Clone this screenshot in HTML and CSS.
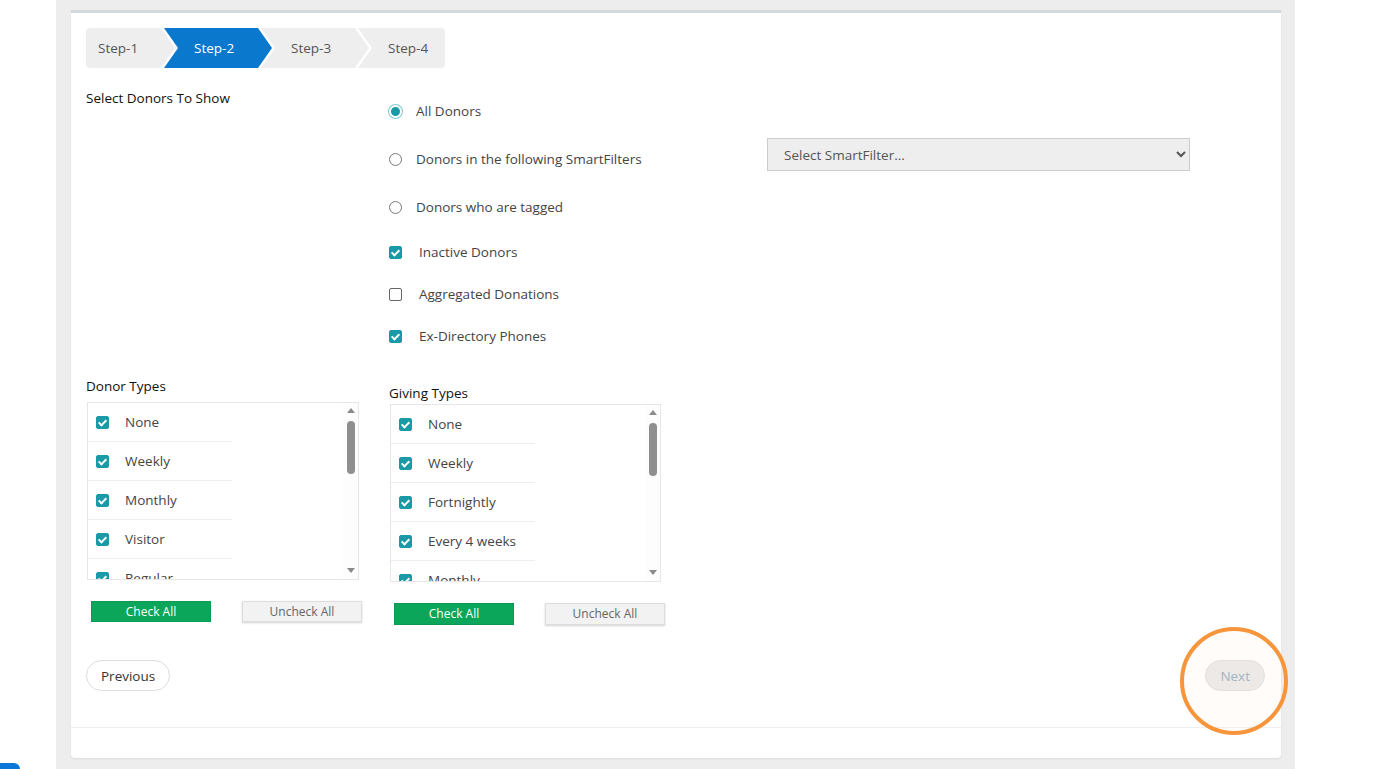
FILE: index.html
```html
<!DOCTYPE html>
<html>
<head>
  <title>Donor Report - Step 2</title>
  <link rel="stylesheet" href="styles.css">
</head>
<body>
  <div class="panel">
    <div class="card">
      <div class="card-body">
        <div class="steps">
          <div class="step step-first">Step-1</div>
          <div class="step active">Step-2</div>
          <div class="step">Step-3</div>
          <div class="step step-last">Step-4</div>
        </div>

        <div class="filters">
          <div class="section-label top-label">Select Donors To Show</div>
          <div class="options">
            <div class="opt radio-row"><span class="radio on"></span>All Donors</div>
            <div class="opt radio-row"><span class="radio"></span>Donors in the following SmartFilters</div>
            <div class="opt radio-row"><span class="radio"></span>Donors who are tagged</div>
            <div class="opt check-row"><span class="cb on"></span>Inactive Donors</div>
            <div class="opt check-row"><span class="cb"></span>Aggregated Donations</div>
            <div class="opt check-row"><span class="cb on"></span>Ex-Directory Phones</div>
          </div>
          <div class="smart">
            <select class="smart-select">
              <option>Select SmartFilter...</option>
            </select>
          </div>
        </div>

        <div class="types">
          <div class="type-col donor-col">
            <div class="section-label">Donor Types</div>
            <div class="listbox">
              <ul class="items">
                <li><span class="cb on"></span>None</li>
                <li><span class="cb on"></span>Weekly</li>
                <li><span class="cb on"></span>Monthly</li>
                <li><span class="cb on"></span>Visitor</li>
                <li><span class="cb on"></span>Regular</li>
              </ul>
              <div class="sbar"><span class="arr up"></span><span class="thumb"></span><span class="arr down"></span></div>
            </div>
            <div class="btns">
              <button class="btn-check">Check All</button>
              <button class="btn-uncheck">Uncheck All</button>
            </div>
          </div>

          <div class="type-col giving-col">
            <div class="section-label">Giving Types</div>
            <div class="listbox">
              <ul class="items">
                <li><span class="cb on"></span>None</li>
                <li><span class="cb on"></span>Weekly</li>
                <li><span class="cb on"></span>Fortnightly</li>
                <li><span class="cb on"></span>Every 4 weeks</li>
                <li><span class="cb on"></span>Monthly</li>
              </ul>
              <div class="sbar"><span class="arr up"></span><span class="thumb"></span><span class="arr down"></span></div>
            </div>
            <div class="btns">
              <button class="btn-check">Check All</button>
              <button class="btn-uncheck">Uncheck All</button>
            </div>
          </div>
        </div>

        <div class="nav">
          <button class="pill">Previous</button>
          <div class="next-wrap">
            <button class="pill next" disabled>Next</button>
            <span class="ring"></span>
          </div>
        </div>
      </div>
      <div class="card-footer"></div>
    </div>
  </div>
  <div class="chat-tab"></div>
</body>
</html>
```

FILE: styles.css
```css
body {
  margin: 0;
  background: #fff;
  font-family: "Open Sans", "Liberation Sans", sans-serif;
  font-size: 13.5px;
  color: #333;
}

.panel {
  margin-left: 56px;
  width: 1239px;
  height: 769px;
  padding-top: 10px;
  box-sizing: border-box;
  background: #eeedee;
  overflow: hidden;
}

.card {
  margin-left: 15px;
  width: 1210px;
  background: #fff;
  border-top: 3px solid #d4d8dc;
  border-radius: 0 0 4px 4px;
  box-shadow: 0 1px 2px rgba(0,0,0,0.08);
}

.card-body {
  padding: 15px 16px 36px 15px;
}

.card-footer {
  border-top: 1px solid #eeeeee;
  height: 30px;
}

/* steps */
.steps {
  display: flex;
  height: 40px;
}

.step {
  height: 40px;
  line-height: 40px;
  width: 108px;
  padding-left: 30px;
  box-sizing: border-box;
  background: #eeeeee;
  color: #555;
  margin-left: -11px;
  clip-path: polygon(0 0, calc(100% - 14px) 0, 100% 50%, calc(100% - 14px) 100%, 0 100%, 14px 50%);
}

.step-first {
  margin-left: 0;
  width: 89px;
  padding-left: 12px;
  border-radius: 4px 0 0 4px;
  clip-path: polygon(0 0, calc(100% - 14px) 0, 100% 50%, calc(100% - 14px) 100%, 0 100%);
}

.step-last {
  width: 87px;
  border-radius: 0 4px 4px 0;
  clip-path: polygon(0 0, 100% 0, 100% 100%, 0 100%, 14px 50%);
}

.step.active {
  background: #0a78cc;
  color: #fff;
}

/* top filters */
.filters {
  display: grid;
  grid-template-columns: 303px 378px 423px;
  margin-top: 19px;
}

.section-label {
  color: #111;
  line-height: 20px;
}

.top-label {
  padding-top: 1px;
}

.opt {
  display: flex;
  align-items: center;
  color: #444;
}

.radio-row {
  height: 48px;
}

.check-row {
  height: 42px;
}

.radio {
  width: 11px;
  height: 11px;
  border: 1px solid #777;
  border-radius: 50%;
  margin-right: 14px;
  flex-shrink: 0;
}

.radio.on {
  width: 9px;
  height: 9px;
  background: #1a9aa6;
  border: 2px solid #fff;
  box-shadow: 0 0 0 1px #7ccbd3;
}

.cb {
  position: relative;
  width: 11px;
  height: 11px;
  border: 1px solid #666;
  border-radius: 2px;
  background: #fff;
  margin-right: 17px;
  flex-shrink: 0;
}

.cb.on {
  background: #1a9aa6;
  border-color: #1a9aa6;
}

.cb.on::after {
  content: "";
  position: absolute;
  left: 3px;
  top: 1px;
  width: 3px;
  height: 6px;
  border: solid #fff;
  border-width: 0 2px 2px 0;
  transform: rotate(45deg);
}

.smart-select {
  margin-top: 51px;
  width: 423px;
  height: 33px;
  background: #eeeeee;
  border: 1px solid #cccccc;
  border-radius: 0;
  padding: 0 12px;
  font-family: inherit;
  font-size: 13.5px;
  color: #555;
}

/* donor / giving types */
.types {
  display: flex;
  margin-top: 19px;
}

.type-col {
  display: flex;
  flex-direction: column;
}

.donor-col {
  width: 303px;
}

.giving-col .section-label {
  padding-top: 7px;
}

.listbox {
  display: flex;
  border: 1px solid #e6e6e6;
  overflow: hidden;
}

.donor-col .listbox {
  margin: 6px 0 0 1px;
  width: 270px;
  height: 176px;
}

.giving-col .listbox {
  margin: 1px 0 0 1px;
  width: 269px;
  height: 176px;
}

.items {
  list-style: none;
  margin: 0;
  padding: 0;
  width: 144px;
  flex-shrink: 0;
}

.items li {
  display: flex;
  align-items: center;
  height: 38px;
  border-bottom: 1px solid #eeeeee;
  padding-left: 8px;
  color: #444;
}

.items .cb {
  margin-right: 16px;
}

.sbar {
  margin-left: auto;
  width: 15px;
  display: flex;
  flex-direction: column;
  align-items: center;
  padding: 5px 0 6px;
  box-sizing: border-box;
  background: #fdfdfd;
}

.arr {
  width: 0;
  height: 0;
  border-left: 4px solid transparent;
  border-right: 4px solid transparent;
}

.arr.up {
  border-bottom: 5px solid #8a8a8a;
}

.arr.down {
  margin-top: auto;
  border-top: 5px solid #8a8a8a;
}

.thumb {
  margin-top: 8px;
  width: 8px;
  height: 53px;
  border-radius: 4px;
  background: #8f8f8f;
}

.btns {
  display: flex;
  margin-top: 21px;
  padding-left: 5px;
}

.btns button {
  width: 120px;
  height: 21px;
  font-family: inherit;
  font-size: 12px;
  line-height: 16px;
  padding: 0;
}

.giving-col .btns button {
  height: 22px;
}

.btn-check {
  background: #0ba65a;
  color: #fff;
  border: 1px solid #0a9a53;
}

.btn-uncheck {
  margin-left: 31px;
  background: #f2f2f2;
  color: #666;
  border: 1px solid #dddddd;
  box-shadow: 0 1px 2px rgba(0,0,0,0.18);
}

/* previous / next */
.nav {
  display: flex;
  justify-content: space-between;
  margin-top: 35px;
}

.pill {
  height: 31px;
  padding: 0 14px;
  border: 1px solid #dddddd;
  border-radius: 16px;
  background: #fff;
  font-family: inherit;
  font-size: 13.5px;
  color: #333;
}

.next-wrap {
  position: relative;
}

.pill.next {
  padding: 0 14px;
  background: #e9e9e9;
  color: #94aac0;
}

.ring {
  position: absolute;
  left: -25px;
  top: -33px;
  width: 100px;
  height: 100px;
  border: 4px solid #f7953c;
  border-radius: 50%;
  background: rgba(255, 236, 214, 0.15);
  pointer-events: none;
}

.chat-tab {
  position: fixed;
  left: 0;
  bottom: 0;
  width: 20px;
  height: 6px;
  background: #0a78d6;
  border-radius: 0 6px 0 0;
}
```
